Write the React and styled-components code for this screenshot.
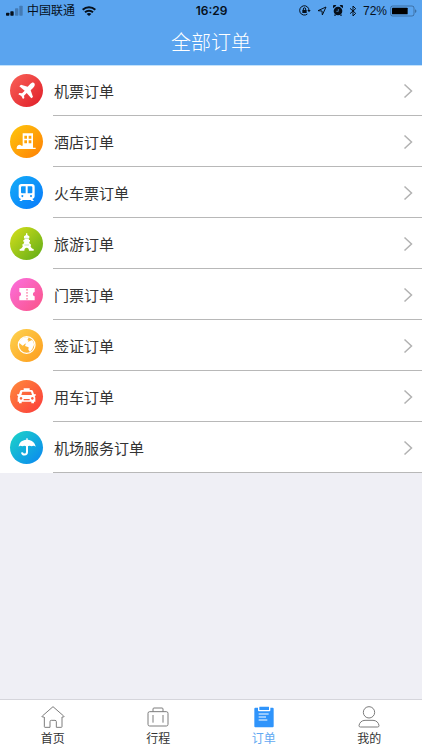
import React from 'react';
import styled, { createGlobalStyle, ThemeProvider } from 'styled-components';

const theme = {
  color: {
    header: '#5aa4ef',
    headerEdge: '#c3e2fb',
    page: '#efeff5',
    white: '#ffffff',
    text: '#333333',
    line: '#b8b8b8',
    chevron: '#b2b2b2',
    tabLine: '#d5d5db',
    tabIcon: '#7c7c7c',
    active: '#2f94fb',
    activeText: '#62a9f2',
    status: '#06101c',
  },
  font: '"Noto Sans CJK SC", "Noto Sans", sans-serif',
  fontLatin: 'Inter, "Noto Sans CJK SC", sans-serif',
};

const GlobalStyle = createGlobalStyle`
  * {
    box-sizing: border-box;
  }
  body {
    margin: 0;
    font-family: ${theme.font};
    color: ${theme.color.text};
    background: ${theme.color.page};
  }
`;

const Page = styled.div`
  display: flex;
  flex-direction: column;
  min-height: 100vh;
`;

const Header = styled.header`
  position: relative;
  background: ${({ theme }) => theme.color.header};
  box-shadow: 0 1px 0 ${({ theme }) => theme.color.headerEdge};
`;

const StatusBar = styled.div`
  display: grid;
  grid-template-columns: 1fr auto 1fr;
  align-items: center;
  height: 21px;
  padding: 0 5px 0 6px;
  font-family: ${({ theme }) => theme.fontLatin};
  font-size: 12px;
  line-height: 20px;
  color: ${({ theme }) => theme.color.status};
`;

const StatusGroup = styled.div`
  display: flex;
  align-items: center;
  justify-content: ${({ $end }) => ($end ? 'flex-end' : 'flex-start')};
  gap: ${({ $end }) => ($end ? '6px' : '4px')};
  svg {
    display: block;
    flex: none;
  }
`;

const Carrier = styled.span`
  margin-right: 3px;
`;

const Clock = styled.time`
  font-weight: 600;
`;

const Battery = styled.span`
  display: flex;
  align-items: center;
  gap: 3px;
  font-family: 'Liberation Sans', sans-serif;
`;

const Title = styled.h1`
  margin: 0;
  height: 44px;
  font-size: 20px;
  font-weight: 300;
  line-height: 42px;
  text-align: center;
  color: ${({ theme }) => theme.color.white};
`;

const Main = styled.main`
  flex: 1;
`;

const OrderList = styled.ul`
  margin: 0;
  padding: 0;
  list-style: none;
  background: ${({ theme }) => theme.color.white};
`;

const OrderLink = styled.a`
  display: flex;
  align-items: stretch;
  gap: 10px;
  height: 51px;
  padding-left: 10px;
  color: inherit;
  text-decoration: none;
`;

const Badge = styled.span`
  flex: none;
  align-self: center;
  width: 33px;
  height: 33px;
  border-radius: 50%;
  background: linear-gradient(135deg, ${({ $from }) => $from}, ${({ $to }) => $to});
  color: ${({ $to }) => $to};
  svg {
    display: block;
  }
`;

const OrderBody = styled.span`
  flex: 1;
  display: flex;
  align-items: center;
  justify-content: space-between;
  padding: 1px 9px 0 1px;
  border-bottom: 1px solid ${({ theme }) => theme.color.line};
`;

const OrderName = styled.span`
  font-size: 15px;
  line-height: 24px;
`;

const TabBar = styled.nav`
  position: sticky;
  bottom: 0;
  display: grid;
  grid-template-columns: repeat(4, 1fr);
  height: 51px;
  background: ${({ theme }) => theme.color.white};
  border-top: 1px solid ${({ theme }) => theme.color.tabLine};
`;

const Tab = styled.a`
  display: flex;
  flex-direction: column;
  align-items: center;
  padding-top: 5px;
  font-size: 12px;
  line-height: 18px;
  text-decoration: none;
  color: ${({ theme, $active }) => ($active ? theme.color.activeText : theme.color.text)};
  svg {
    display: block;
    color: ${({ theme, $active }) => ($active ? theme.color.active : theme.color.tabIcon)};
  }
`;

const Glyph = ({ children }) => (
  <svg width="33" height="33" viewBox="0 0 99 99" fill="#fff" aria-hidden="true">
    {children}
  </svg>
);

const Plane = () => (
  <Glyph>
    <path d="M73 28c3 4 1 9-4 14l-7 7 7 20-5 4-14-16-8 8 1 7-4 3-5-9-9-5 3-4 8 1 8-8-16-13 5-5 20 6 7-7c5-5 10-7 13-3z" />
  </Glyph>
);

const Hotel = () => (
  <Glyph>
    <path fillRule="evenodd" d="M38 25h31v43h8v4H20v-4c2-8 9-11 14-6h4zM43 32v9h8v-9zM56 32v9h8v-9zM43 46v9h8v-9zM56 46v9h8v-9z" />
  </Glyph>
);

const Train = () => (
  <Glyph>
    <path fillRule="evenodd" d="M34 24h32q8 0 8 8v29q0 7-7 8l5 6h-7l-3-3H38l-3 3h-7l5-6q-7-1-7-8V32q0-8 8-8zM36 31q-3 0-3 3v15q0 3 3 3h11V31zM53 31v21h11q3 0 3-3V34q0-3-3-3zM37 57a3 3 0 1 0 .1 0zM63 57a3 3 0 1 0 .1 0z" />
  </Glyph>
);

const Tower = () => (
  <Glyph>
    <path d="M48 19h4v5l6 4v6h-2l1 5h3v5h-3l3 8h3v4h-2c2 6 5 9 10 10v5H57c0-6-3-9-7-9s-7 3-7 9H29v-5c5-1 8-4 10-10h-2v-4h3l3-8h-3v-5h3l1-5h-2v-6l6-4z" />
    <path d="M43 54h14M44 34h12" stroke="currentColor" strokeWidth="1" />
  </Glyph>
);

const Ticket = () => (
  <Glyph>
    <path d="M28 30h46v12c-7 1-7 12 0 13v12H28V55c7-1 7-12 0-13z" />
    <path d="M51 33v32" stroke="currentColor" strokeWidth="3" strokeDasharray="5 4" />
  </Glyph>
);

const Globe = () => (
  <Glyph>
    <circle cx="50" cy="48" r="25" fill="none" stroke="#fff" strokeWidth="4" />
    <path d="M31 34c6-8 16-11 25-8l-4 7 4 2-4 8-7 1-4 4-3 2-9-7-3-3z" />
    <path d="M58 37l8-4c4 4 6 9 6 15l-5 12-7 9-5-7 1-7-11-4 3-8 6-4z" />
  </Glyph>
);

const Taxi = () => (
  <Glyph>
    <path fillRule="evenodd" d="M41 25h18v5h5q4 0 5 4l3 9 5-1v5l-3 1q2 3 2 7v10h-4v5h-8v-5H35v5h-8v-5h-4V55q0-4 2-7l-3-1v-5l5 1 3-9q1-4 5-4h6zM37 35l-3 10h32l-3-10zM33 51a4 4 0 1 0 .1 0zM67 51a4 4 0 1 0 .1 0zM41 57v4h18v-4z" />
  </Glyph>
);

const Umbrella = () => (
  <Glyph>
    <path d="M49 22h4v4c13 1 22 9 24 21q-6-5-12-1-6-4-12 0h-5q-5-4-11 0-6-4-11 1c1-13 10-20 23-21z" />
    <path d="M51 44v19c0 10-14 10-15 1" fill="none" stroke="#fff" strokeWidth="6" />
  </Glyph>
);

const Chevron = styled(({ className }) => (
  <svg className={className} width="10" height="16" viewBox="0 0 20 32" fill="none" stroke="currentColor" strokeWidth="3" aria-hidden="true">
    <path d="M3 3l14 13L3 29" />
  </svg>
))`
  color: ${({ theme }) => theme.color.chevron};
`;

const Signal = () => (
  <svg width="17" height="11" viewBox="0 0 51 33" fill="currentColor" aria-hidden="true">
    <rect y="23" width="10" height="9" rx="2" />
    <rect x="13" y="19" width="10" height="13" rx="2" />
    <rect x="27" y="10" width="10" height="22" rx="2" opacity=".28" />
    <rect x="40" y="2" width="10" height="30" rx="2" opacity=".28" />
  </svg>
);

const Wifi = () => (
  <svg width="14" height="10" viewBox="0 0 42 30" fill="none" stroke="currentColor" strokeWidth="6" aria-hidden="true">
    <path d="M2 11c11-10 27-10 38 0M9 19c7-6 17-6 24 0" />
    <path d="M21 30l-7-6c4-4 10-4 14 0z" fill="currentColor" stroke="none" />
  </svg>
);

const RotationLock = () => (
  <svg width="12" height="11" viewBox="0 0 36 33" fill="none" stroke="currentColor" strokeWidth="3" aria-hidden="true">
    <path d="M25 27a14 14 0 1 1 5-10" />
    <path d="M25 15h10l-5 7z" fill="currentColor" stroke="none" />
    <path d="M10 15h13v9H10z" fill="currentColor" stroke="none" />
    <path d="M13 16v-4c0-5 7-5 7 0v4" />
  </svg>
);

const Location = () => (
  <svg width="10" height="10" viewBox="0 0 30 30" fill="none" stroke="currentColor" strokeWidth="3" strokeLinejoin="round" aria-hidden="true">
    <path d="M27 3 3 14l12 1 1 12z" />
  </svg>
);

const Alarm = () => (
  <svg width="10" height="11" viewBox="0 0 30 33" aria-hidden="true">
    <g fill="currentColor">
      <circle cx="15" cy="18" r="13" />
      <path d="M0 10a6 6 0 0 1 10-8zM30 10a6 6 0 0 0-10-8z" />
      <path d="M6 26l-3 6h6zM24 26l3 6h-6z" />
    </g>
    <path d="M16 12v7h-6" fill="none" stroke={theme.color.header} strokeWidth="2" />
  </svg>
);

const Bluetooth = () => (
  <svg width="8" height="12" viewBox="0 0 24 36" fill="none" stroke="currentColor" strokeWidth="3" aria-hidden="true">
    <path d="M3 10l17 15-8 8V3l8 8L3 26" />
  </svg>
);

const BatteryIcon = () => (
  <svg width="27" height="12" viewBox="0 0 81 36" aria-hidden="true">
    <rect x="2" y="3" width="70" height="30" rx="6" fill="none" stroke="currentColor" strokeWidth="2" opacity=".5" />
    <rect x="6" y="8" width="47" height="20" rx="2" fill="#000" />
    <path d="M76 13c4 2 4 9 0 11z" fill="currentColor" opacity=".5" />
  </svg>
);

const TabGlyph = ({ children }) => (
  <svg width="24" height="24" viewBox="0 0 72 72" fill="none" stroke="currentColor" strokeWidth="3" strokeLinejoin="round" aria-hidden="true">
    {children}
  </svg>
);

const HomeIcon = () => (
  <TabGlyph>
    <path d="M9 36h-5q-2-1 0-3L36 5l32 28q2 2 0 3h-5v29q0 2-2 2H46V50q0-4-4-4H31q-4 0-4 4v17H12q-2 0-2-2V36" />
  </TabGlyph>
);

const TripIcon = () => (
  <TabGlyph>
    <rect x="6" y="20" width="60" height="43" rx="5" />
    <path d="M21 20v-8q0-3 3-3h24q3 0 3 3v8M21 30v23M51 30v23" />
  </TabGlyph>
);

const OrderIcon = () => (
  <TabGlyph>
    <path d="M10 8h8v8q0 3 3 3h31q3 0 3-3V8h7q3 0 3 3v53q0 3-3 3H10q-3 0-3-3V11q0-3 3-3z" fill="currentColor" stroke="none" />
    <rect x="22" y="5" width="29" height="10" rx="1" fill="currentColor" stroke="none" />
    <path d="M20 27h30M20 36h22M20 45h26" stroke="#fff" />
  </TabGlyph>
);

const MineIcon = () => (
  <TabGlyph>
    <circle cx="36" cy="22" r="17" />
    <path d="M24 46h24c10 0 17 7 18 16q0 4-4 4H10q-4 0-4-4c1-9 8-16 18-16z" />
  </TabGlyph>
);

const orders = [
  { name: '机票订单', icon: Plane, from: '#fa6258', to: '#df1d28' },
  { name: '酒店订单', icon: Hotel, from: '#fec80d', to: '#ff7e05' },
  { name: '火车票订单', icon: Train, from: '#14adf8', to: '#0879fa' },
  { name: '旅游订单', icon: Tower, from: '#d8e01b', to: '#5cab18' },
  { name: '门票订单', icon: Ticket, from: '#fb6fe0', to: '#fa5386' },
  { name: '签证订单', icon: Globe, from: '#fed450', to: '#fd9b1c' },
  { name: '用车订单', icon: Taxi, from: '#ff8c3b', to: '#fb3a3c' },
  { name: '机场服务订单', icon: Umbrella, from: '#1cd6c6', to: '#0a85f2' },
];

const tabs = [
  { name: '首页', icon: HomeIcon },
  { name: '行程', icon: TripIcon },
  { name: '订单', icon: OrderIcon, active: true },
  { name: '我的', icon: MineIcon },
];

const App = () => (
  <ThemeProvider theme={theme}>
    <GlobalStyle />
    <Page>
      <Header>
        <StatusBar>
          <StatusGroup>
            <Signal />
            <Carrier>中国联通</Carrier>
            <Wifi />
          </StatusGroup>
          <Clock>16:29</Clock>
          <StatusGroup $end>
            <RotationLock />
            <Location />
            <Alarm />
            <Bluetooth />
            <Battery>
              <span>72%</span>
              <BatteryIcon />
            </Battery>
          </StatusGroup>
        </StatusBar>
        <Title>全部订单</Title>
      </Header>
      <Main>
        <OrderList>
          {orders.map(({ name, icon: Icon, from, to }) => (
            <li key={name}>
              <OrderLink href="#">
                <Badge $from={from} $to={to}>
                  <Icon />
                </Badge>
                <OrderBody>
                  <OrderName>{name}</OrderName>
                  <Chevron />
                </OrderBody>
              </OrderLink>
            </li>
          ))}
        </OrderList>
      </Main>
      <TabBar>
        {tabs.map(({ name, icon: Icon, active }) => (
          <Tab key={name} href="#" $active={active} aria-current={active ? 'page' : undefined}>
            <Icon />
            {name}
          </Tab>
        ))}
      </TabBar>
    </Page>
  </ThemeProvider>
);

export default App;
